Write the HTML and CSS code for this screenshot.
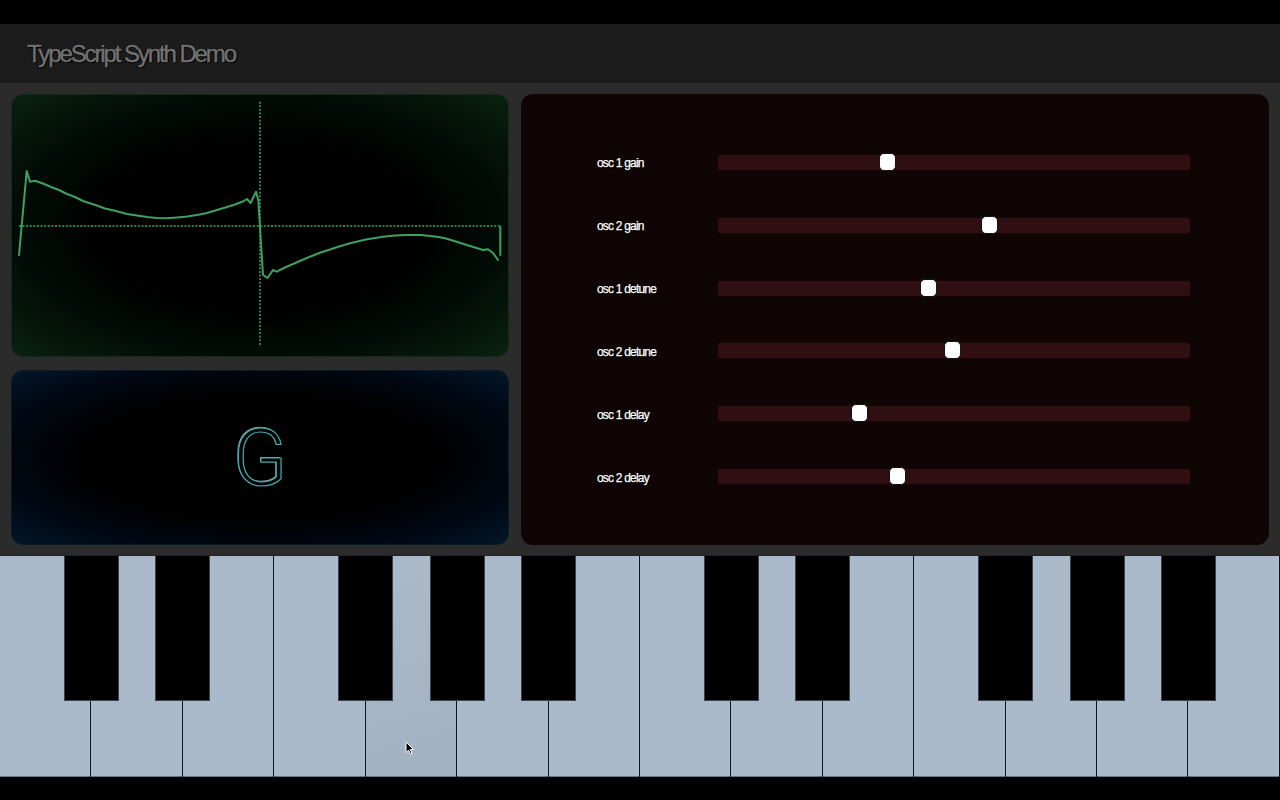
FILE: index.html
```html
<!DOCTYPE html>
<html lang="en">
<head>
<meta charset="utf-8">
<title>TypeScript Synth Demo</title>
<link rel="stylesheet" href="styles.css">
</head>
<body>
<div class="app">
  <header class="topbar">
    <h1 class="title">TypeScript Synth Demo</h1>
  </header>

  <main class="stage">
    <div class="left-col">
      <section class="panel scope">
        <svg class="scope-svg" viewBox="1 1 496 261" preserveAspectRatio="none" aria-hidden="true">
          <path class="axis" d="M8,132 H490"/>
          <path class="axis" d="M249,7.7 V252.7"/>
          <polyline class="wave" points="8,161 15.7,77 19,87.7 24,86.7 32,89.5 40,93 48,96 56,100 64,103 72,107 83,110.5 94,114.5 105,117 116,120 126,121.5 136,123 146,124 156,124.3 166,123.5 176,122.5 186,121 196,119 206,116 216,113 224,110.5 232,107.5 236,105 239.7,109 245,97.7 247.3,106 252,181 256.5,184 262,176 265.7,177.7 274,173.5 282,170 290,166.5 299,162.7 309,158.8 319,155.5 329,152.2 339,149.3 355,145.5 372,142.7 384,141.5 395.7,141 410,141 425.7,142.7 433,144 440,146 448,148.5 455.7,151 464,153.5 472,156 477,155.3 482,159 487,166"/>
          <path class="wave" d="M489.3,132.7 V161"/>
        </svg>
      </section>
      <section class="panel note">
        <span class="note-name">G</span>
      </section>
    </div>

    <section class="panel controls">
      <div class="control-row">
        <label class="control-label">osc 1 gain</label>
        <div class="track"><span class="thumb" style="left: calc((100% - 17px) * 0.354)"></span></div>
      </div>
      <div class="control-row">
        <label class="control-label">osc 2 gain</label>
        <div class="track"><span class="thumb" style="left: calc((100% - 17px) * 0.577)"></span></div>
      </div>
      <div class="control-row">
        <label class="control-label">osc 1 detune</label>
        <div class="track"><span class="thumb" style="left: calc((100% - 17px) * 0.445)"></span></div>
      </div>
      <div class="control-row">
        <label class="control-label">osc 2 detune</label>
        <div class="track"><span class="thumb" style="left: calc((100% - 17px) * 0.496)"></span></div>
      </div>
      <div class="control-row">
        <label class="control-label">osc 1 delay</label>
        <div class="track"><span class="thumb" style="left: calc((100% - 17px) * 0.293)"></span></div>
      </div>
      <div class="control-row">
        <label class="control-label">osc 2 delay</label>
        <div class="track"><span class="thumb" style="left: calc((100% - 17px) * 0.375)"></span></div>
      </div>
    </section>
  </main>

  <div class="piano">
    <div class="white-key"></div>
    <div class="white-key"></div>
    <div class="white-key"></div>
    <div class="white-key"></div>
    <div class="white-key is-hover"></div>
    <div class="white-key"></div>
    <div class="white-key"></div>
    <div class="white-key"></div>
    <div class="white-key"></div>
    <div class="white-key"></div>
    <div class="white-key"></div>
    <div class="white-key"></div>
    <div class="white-key"></div>
    <div class="white-key"></div>

    <div class="black-key" style="left: calc(100% * 1 / 14 - 27.5px)"></div>
    <div class="black-key" style="left: calc(100% * 2 / 14 - 27.5px)"></div>
    <div class="black-key" style="left: calc(100% * 4 / 14 - 27.5px)"></div>
    <div class="black-key" style="left: calc(100% * 5 / 14 - 27.5px)"></div>
    <div class="black-key" style="left: calc(100% * 6 / 14 - 27.5px)"></div>
    <div class="black-key" style="left: calc(100% * 8 / 14 - 27.5px)"></div>
    <div class="black-key" style="left: calc(100% * 9 / 14 - 27.5px)"></div>
    <div class="black-key" style="left: calc(100% * 11 / 14 - 27.5px)"></div>
    <div class="black-key" style="left: calc(100% * 12 / 14 - 27.5px)"></div>
    <div class="black-key" style="left: calc(100% * 13 / 14 - 27.5px)"></div>

    <svg class="cursor" viewBox="0 0 10 14" aria-hidden="true">
      <path d="M1,1 L1,11.5 L3.6,9.2 L5.4,13 L7,12.3 L5.3,8.6 L8.6,8.6 Z" fill="#000" stroke="#fff" stroke-width="1" stroke-linejoin="round"/>
    </svg>
  </div>
</div>
</body>
</html>
```

FILE: styles.css
```css
* {
  box-sizing: border-box;
}

html,
body {
  margin: 0;
  background: #000;
}

body {
  width: 1280px;
  height: 800px;
  overflow: hidden;
  font-family: "Liberation Sans", Arial, Helvetica, sans-serif;
}

.app {
  padding-top: 24px;
}

/* Header */
.topbar {
  height: 59px;
  background: #1c1c1c;
  display: flex;
  align-items: center;
  padding-left: 27px;
}

.title {
  margin: 0;
  font-size: 24px;
  font-weight: 400;
  letter-spacing: -2.1px;
  color: #737373;
  -webkit-text-stroke: 0.5px #6a6a6a;
  text-shadow: 0 0 1px #000, 1px 1px 1px #000, -1px 0 1px #0a0a0a;
  line-height: 1;
}

/* Main stage */
.stage {
  height: 472px;
  background: #2b2b2b;
  padding: 11px 11px 10px;
  display: grid;
  grid-template-columns: 498px 748px;
  column-gap: 12px;
}

.left-col {
  display: grid;
  grid-template-rows: 263px 175px;
  row-gap: 13px;
}

.panel {
  border-radius: 12px;
  overflow: hidden;
}

/* Oscilloscope */
.scope {
  background: radial-gradient(ellipse at center, #000 45%, #020c06 70%, #0a2210 100%);
  border: 1px solid #10291a;
}

.scope-svg {
  display: block;
  width: 100%;
  height: 100%;
}

.axis {
  fill: none;
  stroke: #2f8046;
  stroke-width: 2;
  stroke-dasharray: 2 1.6;
}

.wave {
  fill: none;
  stroke: #40a060;
  stroke-width: 2;
  stroke-linejoin: round;
  stroke-linecap: round;
}

/* Note display */
.note {
  background: radial-gradient(ellipse at center, #000 50%, #010712 75%, #02172a 100%);
  border: 1px solid #0a1a28;
  display: flex;
  align-items: center;
  justify-content: center;
}

.note-name {
  font-family: Roboto, "Liberation Sans", sans-serif;
  font-weight: 300;
  font-size: 80px;
  line-height: 1;
  color: #000;
  -webkit-text-stroke: 1.2px #3bb0b3;
  text-shadow: -1px -1px 0 #9a958b;
}

/* Controls */
.controls {
  background: #0e0504;
  padding: 37px 79px 37px 76px;
  display: grid;
  grid-template-rows: repeat(6, 1fr);
}

.control-row {
  display: grid;
  grid-template-columns: 121px 472px;
  align-items: center;
}

.control-label {
  color: #fff;
  font-size: 12px;
  letter-spacing: -0.8px;
  -webkit-text-stroke: 0.25px #fff;
  text-shadow: 0 0 2px #000, 1px 1px 1px #000;
  padding-top: 2px;
}

.track {
  position: relative;
  height: 15px;
  background: #300f12;
  border-radius: 2px;
  box-shadow: 0 0 0 1px #150506;
}

.thumb {
  position: absolute;
  top: 50%;
  width: 17px;
  height: 18px;
  margin-top: -9.5px;
  background: #fff;
  border: 1px solid #111;
  border-radius: 5px;
}

/* Piano */
.piano {
  position: relative;
  height: 222px;
  display: flex;
  background: #aabacb;
  border-top: 1px solid #1d2228;
}

.white-key {
  flex: 1;
  background: #aabacb;
  border-right: 1px solid #0c1624;
  box-shadow: inset 0 -1px 0 #66768a;
}

.white-key:last-of-type {
  border-right: none;
}

.white-key.is-hover {
  background: linear-gradient(165deg, #aabacb 0%, #a3b2c3 100%);
}

.black-key {
  position: absolute;
  top: 0;
  width: 55px;
  height: 145px;
  background: #000;
  border: 1px solid #3c424a;
  border-top: none;
}

.cursor {
  position: absolute;
  left: 405px;
  top: 185px;
  width: 10px;
  height: 14px;
}
```
